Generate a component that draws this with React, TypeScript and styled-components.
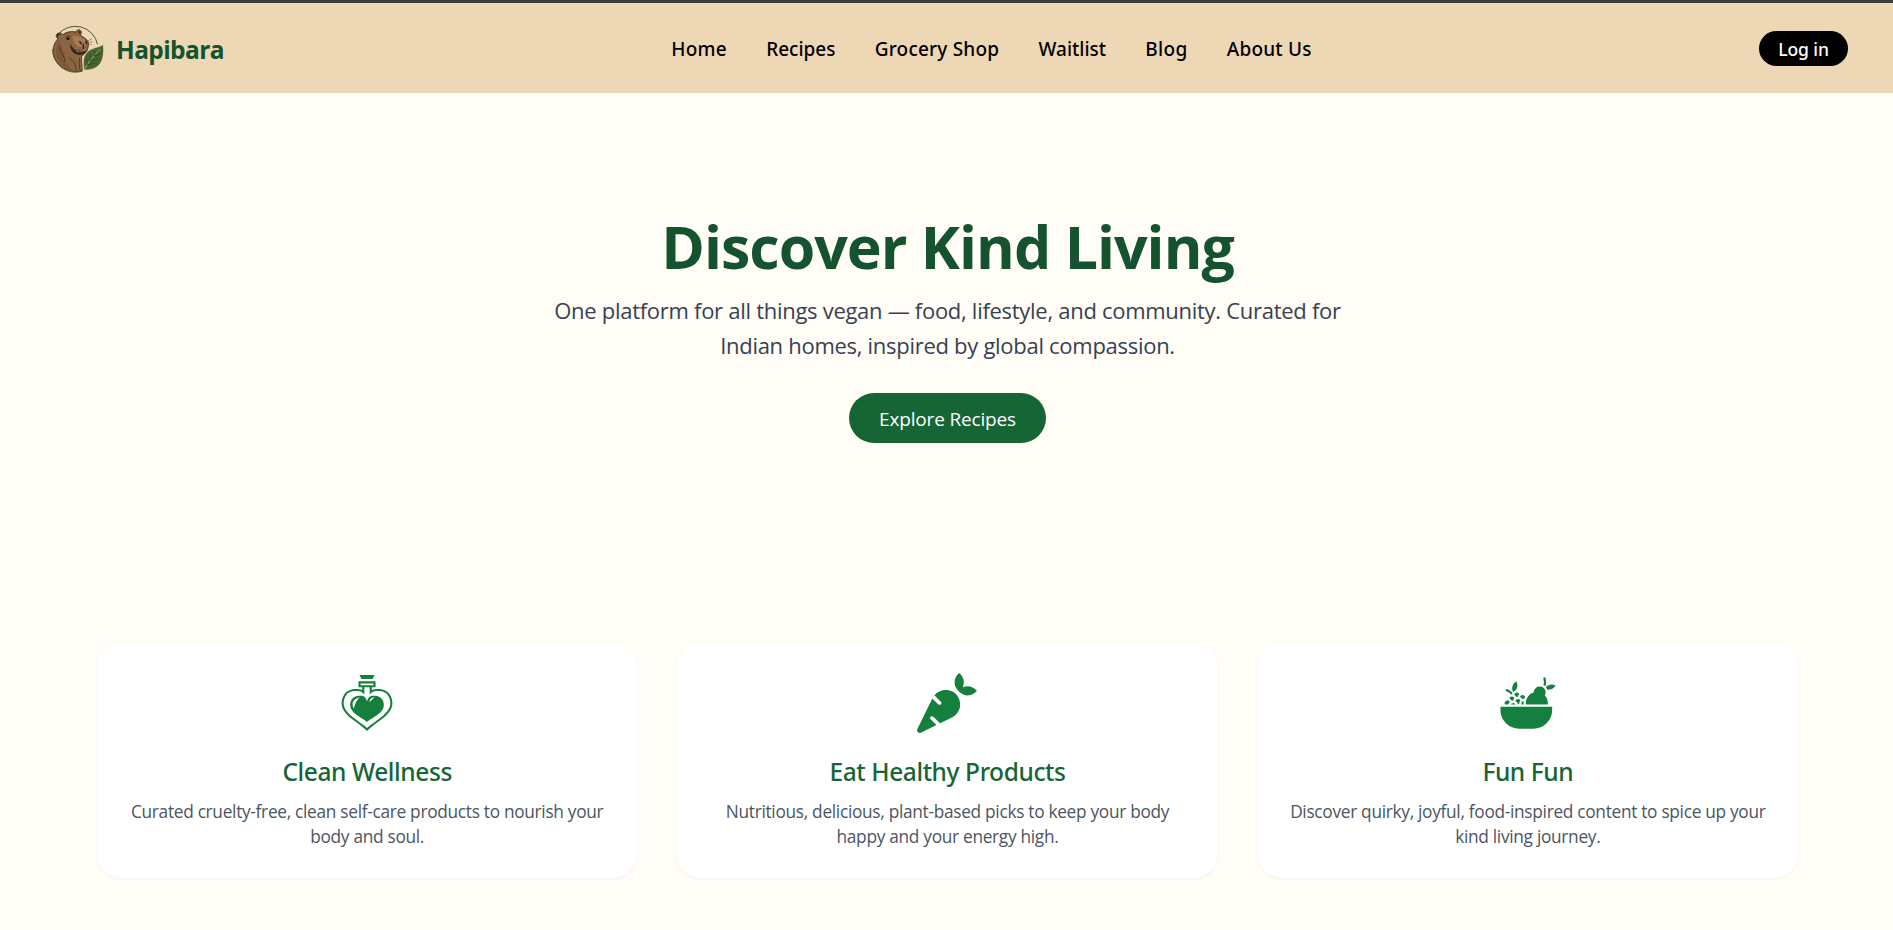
import React from "react";
import styled, { createGlobalStyle } from "styled-components";
import type { IconType } from "react-icons";
import { GiFruitBowl, GiHealthPotion } from "react-icons/gi";
import { FaCarrot } from "react-icons/fa";

const GlobalStyle = createGlobalStyle`
  * { box-sizing: border-box; }
  body {
    margin: 0;
    background: #fffdf6;
    font-family: "Open Sans", "Noto Sans", sans-serif;
    overflow: hidden;
  }
`;

const Page = styled.div`
  height: 930px;
  border-top: 3px solid #3d3d3d;
`;

const Header = styled.header`
  display: flex;
  align-items: center;
  justify-content: space-between;
  height: 90px;
  padding: 0 45px 0 52px;
  background: #eed7b5;
`;

const Brand = styled.a`
  display: flex;
  align-items: center;
  gap: 12px;
`;

const BrandMark = styled.svg`
  width: 52px;
  height: 48px;
  margin-top: 2px;
`;

const BrandName = styled.span`
  padding-top: 3px;
  color: #14532d;
  font-size: 24.5px;
  font-weight: 700;
  line-height: 32px;
  letter-spacing: -0.6px;
`;

const Nav = styled.nav`
  display: flex;
  gap: 39.3px;
  padding-top: 2px;
`;

const NavLink = styled.a<{ $tracking: number }>`
  color: #000;
  font-family: "Noto Sans", sans-serif;
  font-size: 19px;
  font-weight: 500;
  line-height: 28px;
  letter-spacing: ${(p) => p.$tracking}px;
`;

const LoginButton = styled.button`
  width: 89px;
  height: 35px;
  margin-top: 1px;
  padding: 1px 0 0;
  border: 0;
  border-radius: 18px;
  background: #000;
  color: #fff;
  font-family: "Noto Sans", sans-serif;
  font-size: 17.5px;
  font-weight: 500;
  letter-spacing: -0.1px;
`;

const Hero = styled.section`
  display: flex;
  flex-direction: column;
  align-items: center;
  height: 550px;
  padding: 123px 0 0 2px;
  text-align: center;
`;

const HeroTitle = styled.h1`
  margin: 0;
  color: #14532d;
  font-size: 59px;
  font-weight: 700;
  line-height: 60px;
  letter-spacing: -0.97px;
`;

const HeroText = styled.p`
  width: 800px;
  margin: 17px 0 30px;
  color: #374151;
  font-size: 22px;
  line-height: 35px;
  letter-spacing: -0.285px;
`;

const HeroButton = styled.button`
  width: 197px;
  height: 50px;
  padding: 2px 0 0;
  border: 0;
  border-radius: 25px;
  background: #166534;
  color: #fff;
  font-family: inherit;
  font-size: 19px;
  letter-spacing: -0.165px;
`;

const CardGrid = styled.section`
  display: grid;
  grid-template-columns: repeat(3, 1fr);
  gap: 40px;
  padding: 0 95px 0 97px;
`;

const Card = styled.article`
  display: flex;
  flex-direction: column;
  align-items: center;
  height: 235px;
  padding: 30px 28px 0;
  border-radius: 24px;
  background: #fff;
  box-shadow: 0 1px 3px rgba(0, 0, 0, 0.05);
  text-align: center;

  svg {
    width: 60px;
    height: 60px;
    color: #15803d;
  }
`;

const CardTitle = styled.h2`
  margin: 23px 0 11px;
  color: #166534;
  font-family: "Noto Sans", sans-serif;
  font-size: 24.5px;
  font-weight: 500;
  line-height: 32px;
  letter-spacing: -0.4px;
`;

const CardText = styled.p`
  margin: 0;
  color: #4b5563;
  font-size: 17.3px;
  line-height: 25px;
  letter-spacing: -0.3px;
`;

const links = [
  { label: "Home", tracking: 0.2 },
  { label: "Recipes", tracking: 0 },
  { label: "Grocery Shop", tracking: 0.2 },
  { label: "Waitlist", tracking: 0 },
  { label: "Blog", tracking: 0.3 },
  { label: "About Us", tracking: 0.2 },
];

const features: { icon: IconType; title: string; text: string }[] = [
  {
    icon: GiHealthPotion,
    title: "Clean Wellness",
    text: "Curated cruelty-free, clean self-care products to nourish your body and soul.",
  },
  {
    icon: FaCarrot,
    title: "Eat Healthy Products",
    text: "Nutritious, delicious, plant-based picks to keep your body happy and your energy high.",
  },
  {
    icon: GiFruitBowl,
    title: "Fun Fun",
    text: "Discover quirky, joyful, food-inspired content to spice up your kind living journey.",
  },
];

function CapybaraLogo() {
  return (
    <BrandMark viewBox="66 76 156 144" aria-hidden="true">
      <path d="M85 103 A68 68 0 0 1 202.6 134" fill="none" stroke="#4c5a33" strokeWidth="3" />
      <path
        d="M84 117 C76 114 77 101 87 100 C93 99 97 102 99 105 C107 97 121 94 138 97 C139 90 149 88 153 94 C156 99 153 103 151 106 C160 113 171 118 174 126 C177 135 174 145 172 151 C168 163 158 166 155 170 C153 185 158 200 156 214 C123 221 88 206 74 176 C65 155 70 131 84 117Z"
        fill="#8c6442"
        stroke="#3b2a1c"
        strokeWidth="2.5"
      />
      <path d="M88 118 C78 137 74 160 84 178 C94 199 112 211 130 213 C112 199 101 184 103 160 C92 153 88 138 88 118Z" fill="#7d5837" />
      <path d="M126 111 C140 104 155 113 166 122 C172 132 168 142 153 143 C139 141 134 130 126 111Z" fill="#a67c55" />
      <path d="M83 112 C80 105 86 102 91 106" fill="none" stroke="#3b2a1c" strokeWidth="4" />
      <path d="M144 98 C148 94 151 98 149 102" fill="none" stroke="#3b2a1c" strokeWidth="4" />
      <ellipse cx="114" cy="117" rx="5" ry="4" fill="#20150e" />
      <path d="M106 112 C110 107 117 108 121 112" fill="none" stroke="#3b2a1c" strokeWidth="2.5" />
      <path d="M146 127 C151 125 154 129 153 134 M166 125 C169 125 170 129 168 133 M160 132 L160 147" fill="none" stroke="#2a1b12" strokeWidth="4" />
      <path d="M122 132 C119 146 126 159 140 164 C153 169 164 162 168 153 C158 156 151 151 146 153 C136 153 127 146 122 132Z" fill="#35251a" />
      <path d="M137 154 C147 158 158 157 168 148" fill="none" stroke="#c39a70" strokeWidth="2" />
      <path d="M91 137 C86 158 108 169 104 188 M115 174 C131 181 138 195 138 211 M148 174 C150 190 147 202 150 212" fill="none" stroke="#4c3420" strokeWidth="2.5" />
      <path d="M173 124 L186 117 M175 129 L188 126 M176 134 L186 134" stroke="#64503a" strokeWidth="1.5" />
      <path
        d="M220 133 C214 144 178 141 166 164 C157 180 160 196 161 211 C181 213 201 207 212 190 C223 172 221 148 220 133Z"
        fill="#48652d"
        stroke="#eed7b5"
        strokeWidth="2.5"
      />
      <path d="M160 213 C174 190 190 168 210 149" fill="none" stroke="#c8cf9c" strokeWidth="2" />
      <path d="M171 196 L170 176 M180 183 L182 162 M192 169 L196 153 M171 196 L194 191 M180 183 L205 177 M192 169 L211 163" stroke="#293f1c" strokeWidth="2" fill="none" />
      <path d="M68 148 A68 68 0 0 0 158 214" fill="none" stroke="#4c5a33" strokeWidth="3" />
    </BrandMark>
  );
}

export default function App() {
  return (
    <Page>
      <GlobalStyle />
      <Header>
        <Brand>
          <CapybaraLogo />
          <BrandName>Hapibara</BrandName>
        </Brand>
        <Nav>
          {links.map(({ label, tracking }) => (
            <NavLink key={label} $tracking={tracking}>
              {label}
            </NavLink>
          ))}
        </Nav>
        <LoginButton>Log in</LoginButton>
      </Header>
      <Hero>
        <HeroTitle>Discover Kind Living</HeroTitle>
        <HeroText>
          One platform for all things vegan — food, lifestyle, and community. Curated for Indian homes, inspired by
          global compassion.
        </HeroText>
        <HeroButton>Explore Recipes</HeroButton>
      </Hero>
      <CardGrid>
        {features.map(({ icon: Icon, title, text }) => (
          <Card key={title}>
            <Icon />
            <CardTitle>{title}</CardTitle>
            <CardText>{text}</CardText>
          </Card>
        ))}
      </CardGrid>
    </Page>
  );
}
